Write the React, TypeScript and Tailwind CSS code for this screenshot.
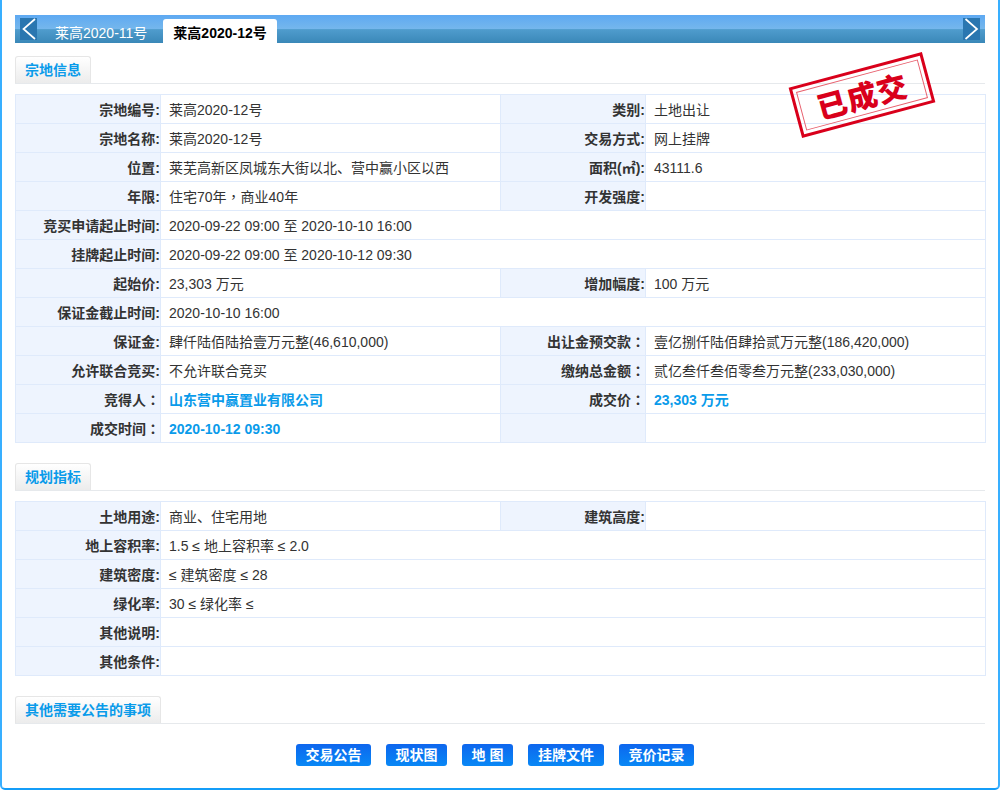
const font = "font-['Liberation_Sans','Noto_Sans_CJK_SC',sans-serif]";

const blue = "font-bold text-[#0a9bea]";

type Row = [string, React.ReactNode, string?, React.ReactNode?];

// full-width colon and comma sit centred in the reference, which is the TC form
const Tc = ({ children }: { children: string }) => (
  <span className="font-['Noto_Sans_CJK_TC',sans-serif]">{children}</span>
);

const landRows: Row[] = [
  ["宗地编号:", "莱高2020-12号", "类别:", "土地出让"],
  ["宗地名称:", "莱高2020-12号", "交易方式:", "网上挂牌"],
  ["位置:", "莱芜高新区凤城东大街以北、营中赢小区以西", "面积(㎡):", "43111.6"],
  ["年限:", <>住宅70年<Tc>，</Tc>商业40年</>, "开发强度:", ""],
  ["竞买申请起止时间:", "2020-09-22 09:00 至 2020-10-10 16:00"],
  ["挂牌起止时间:", "2020-09-22 09:00 至 2020-10-12 09:30"],
  ["起始价:", "23,303 万元", "增加幅度:", "100 万元"],
  ["保证金截止时间:", "2020-10-10 16:00"],
  ["保证金:", "肆仟陆佰陆拾壹万元整(46,610,000)", "出让金预交款：", "壹亿捌仟陆佰肆拾贰万元整(186,420,000)"],
  ["允许联合竞买:", "不允许联合竞买", "缴纳总金额：", "贰亿叁仟叁佰零叁万元整(233,030,000)"],
  ["竞得人：", <span className={blue}>山东营中赢置业有限公司</span>, "成交价：", <span className={blue}>23,303 万元</span>],
  ["成交时间：", <span className={blue}>2020-10-12 09:30</span>, "", ""],
];

const planRows: Row[] = [
  ["土地用途:", "商业、住宅用地", "建筑高度:", ""],
  ["地上容积率:", "1.5 ≤ 地上容积率 ≤ 2.0"],
  ["建筑密度:", "≤ 建筑密度 ≤ 28"],
  ["绿化率:", "30 ≤ 绿化率 ≤"],
  ["其他说明:", ""],
  ["其他条件:", ""],
];

const buttons = [
  { text: "交易公告", width: "w-[75px]" },
  { text: "现状图", width: "w-[61px]" },
  { text: "地 图", width: "w-[51px]" },
  { text: "挂牌文件", width: "w-[76px]" },
  { text: "竞价记录", width: "w-[75px]" },
];

const labelCell = "h-[29px] border border-[#dfeafb] bg-[#eef4fe] p-0 pt-[2px] text-right font-bold text-[#333] whitespace-nowrap";
const valueCell = "h-[29px] border border-[#dfeafb] bg-white p-0 pt-[2px] pl-[8px] text-left text-[#333] whitespace-nowrap";

const Label = ({ text }: { text?: string }) => {
  if (text && text.endsWith("：")) {
    return (
      <>
        {text.slice(0, -1)}
        <Tc>：</Tc>
      </>
    );
  }
  return <>{text}</>;
};

const InfoTable = ({ rows }: { rows: Row[] }) => (
  <table className="w-[970px] table-fixed border-collapse text-[14px]">
    <colgroup>
      <col className="w-[145px]" />
      <col className="w-[340px]" />
      <col className="w-[145px]" />
      <col className="w-[340px]" />
    </colgroup>
    <tbody>
      {rows.map((row, i) => (
        <tr key={i}>
          <td className={labelCell}><Label text={row[0]} /></td>
          {row.length > 2 ? (
            <>
              <td className={valueCell}>{row[1]}</td>
              <td className={labelCell}><Label text={row[2]} /></td>
              <td className={valueCell}>{row[3]}</td>
            </>
          ) : (
            <td colSpan={3} className={valueCell}>{row[1]}</td>
          )}
        </tr>
      ))}
    </tbody>
  </table>
);

const SectionTitle = ({ title }: { title: string }) => (
  <div className="flex h-[28px] items-end border-b border-[#e6e9ec]">
    <div className="h-[27px] rounded-t-[3px] border border-b-0 border-[#e6e6e6] bg-gradient-to-b from-white to-[#ececec] px-[9px] text-[14px] leading-[27px] font-bold text-[#0a9bea]">
      {title}
    </div>
  </div>
);

const Arrow = ({ dir }: { dir: "left" | "right" }) => (
  <div className="h-[22px] w-[17px] bg-[#2a76b0]">
    <svg width="17" height="22" viewBox="0 0 17 22" fill="none" stroke="white" strokeWidth="1.7">
      <path d={dir === "left" ? "M15 1 L3.5 11 L15 21" : "M2.5 1 L14 11 L2.5 21"} />
    </svg>
  </div>
);

const Stamp = () => (
  <div className="absolute left-[793px] top-[69px] flex h-[52px] w-[138px] -rotate-[15deg] items-center justify-center border-[3px] border-[#d9001b] p-[3px]">
    <div className="flex h-full w-full items-center justify-center border border-[#e8606e] font-['Noto_Sans_CJK_SC',serif] text-[30px] leading-none font-black tracking-[1px] text-[#d9001b]">
      已成交
    </div>
  </div>
);

export default function App() {
  return (
    <div className={`${font} relative h-[790px] w-[1001px] overflow-hidden bg-white`}>
      <div className="h-[790px] w-[1000px] rounded-b-[5px] border-x-2 border-b-2 border-l-[#38afff] border-r-[#38afff] border-b-[#149df8] px-[13px] pt-[15px]">
        <div className="relative flex h-[28px] w-[970px] bg-[linear-gradient(to_bottom,#5ea9f2_0%,#75b7ec_50%,#4f9ccd_52%,#3a88b8_100%)] px-[5px] pt-[3px]">
          <Arrow dir="left" />
          <div className="flex flex-1 items-end pl-[18px]">
            <div className="h-[24px] text-[14px] leading-[28px] text-white">莱高2020-11号</div>
            <div className="ml-[16px] h-[24px] rounded-t-[3px] bg-white px-[10px] text-[14px] leading-[28px] font-bold text-black">
              莱高2020-12号
            </div>
          </div>
          <Arrow dir="right" />
        </div>

        <div className="mt-[13px] w-[970px]">
          <SectionTitle title="宗地信息" />
        </div>
        <div className="mt-[10px]">
          <InfoTable rows={landRows} />
        </div>

        <div className="mt-[20px] w-[970px]">
          <SectionTitle title="规划指标" />
        </div>
        <div className="mt-[10px]">
          <InfoTable rows={planRows} />
        </div>

        <div className="mt-[20px] w-[970px]">
          <SectionTitle title="其他需要公告的事项" />
        </div>

        <div className="mt-[20px] flex justify-center gap-[15px] pr-[10px]">
          {buttons.map((b) => (
            <div
              key={b.text}
              className={`${b.width} h-[22px] rounded-[3px] bg-gradient-to-b from-[#0f66ee] to-[#0a88f5] text-center text-[14px] leading-[23px] font-bold whitespace-pre text-white`}
            >
              {b.text}
            </div>
          ))}
        </div>
      </div>
      <Stamp />
    </div>
  );
}
